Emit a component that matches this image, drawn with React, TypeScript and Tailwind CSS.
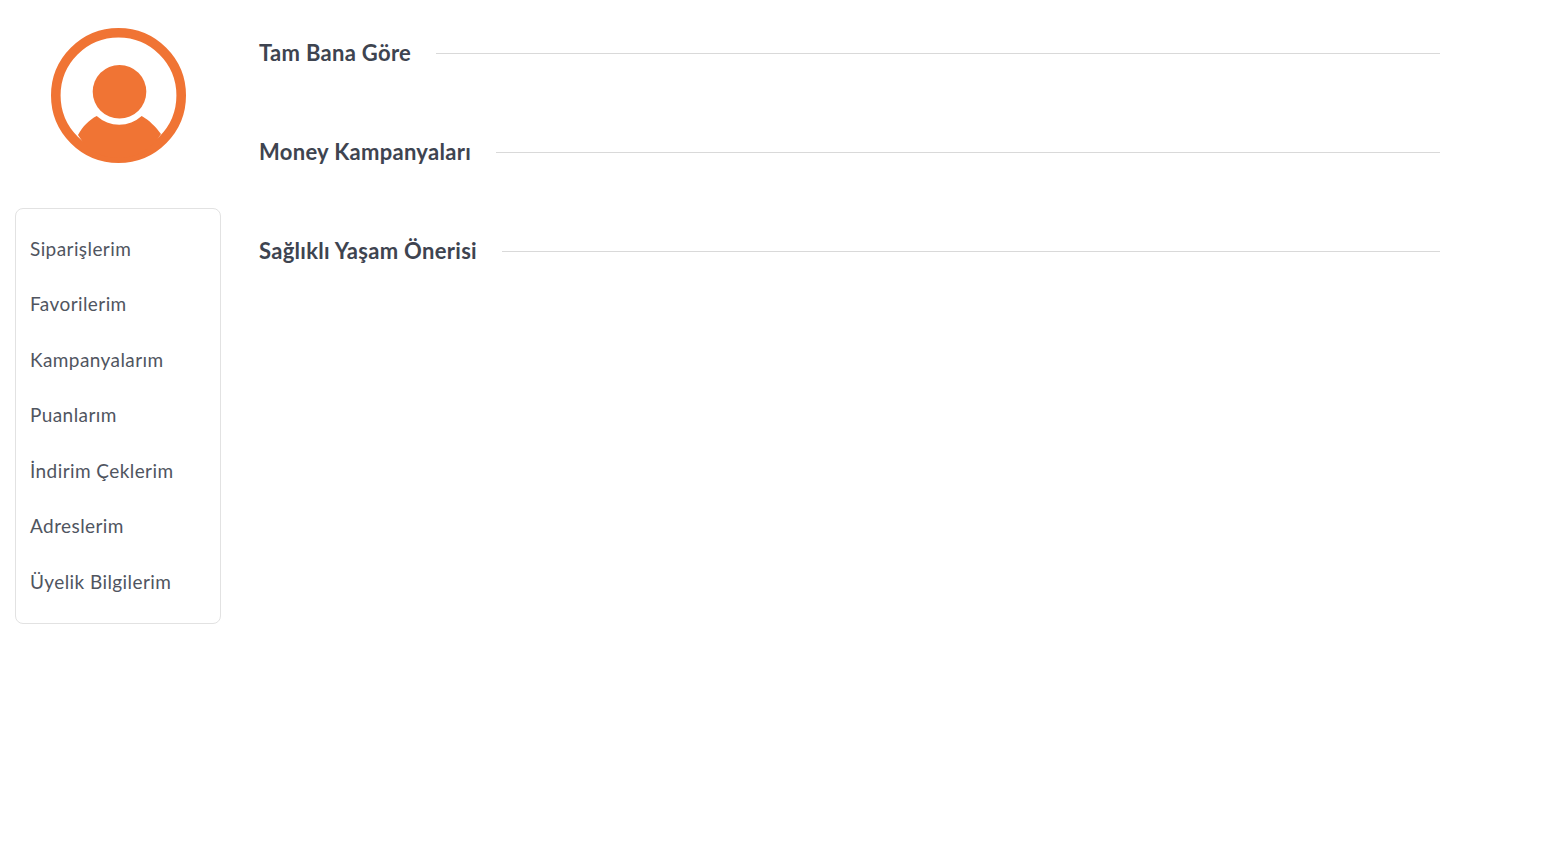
const menuItems = [
  "Siparişlerim",
  "Favorilerim",
  "Kampanyalarım",
  "Puanlarım",
  "İndirim Çeklerim",
  "Adreslerim",
  "Üyelik Bilgilerim",
];

const sections = ["Tam Bana Göre", "Money Kampanyaları", "Sağlıklı Yaşam Önerisi"];

function Avatar() {
  return (
    <svg width="135" height="135" viewBox="0 0 135 135" className="block">
      <circle cx="67.5" cy="67.5" r="62.7" fill="#fff" stroke="#f07434" strokeWidth="9.6" />
      <circle cx="68.5" cy="63.8" r="26.8" fill="#f07434" />
      <path
        d="M27 107 C32 98 38 92 45.7 88 A33.5 33.5 0 0 0 90.7 88 C98 92 105 99 110 106 C100 122 85 130 67.5 130 C50 130 36 122 27 107 Z"
        fill="#f07434"
      />
    </svg>
  );
}

export default function App() {
  return (
    <div className="min-h-[864px] bg-white font-['Lato',sans-serif] flex items-start">
      {/* LEFT COLUMN */}
      <aside className="w-[206px] ml-[15px] shrink-0">
        <div className="pt-[28px] pl-[36px]">
          <Avatar />
        </div>
        <nav className="mt-[45px] h-[416px] border border-[#e2e2e2] rounded-[8px] pl-[14px] pt-[12px]">
          {menuItems.map((item) => (
            <div
              key={item}
              className="h-[55.5px] flex items-center text-[19px] tracking-[0.42px] text-[#50555f]"
            >
              {item}
            </div>
          ))}
        </nav>
      </aside>

      {/* SECTIONS */}
      <main className="ml-[38px] w-[1181px] pt-[37px] flex flex-col gap-[67px]">
        {sections.map((title) => (
          <div key={title} className="h-[32px] flex items-center gap-[25px]">
            <h2 className="text-[22px] leading-[30px] font-bold tracking-[0.3px] text-[#3e4450] whitespace-nowrap">
              {title}
            </h2>
            <div className="flex-1 h-px bg-[#d9d9d9]" />
          </div>
        ))}
      </main>
    </div>
  );
}
